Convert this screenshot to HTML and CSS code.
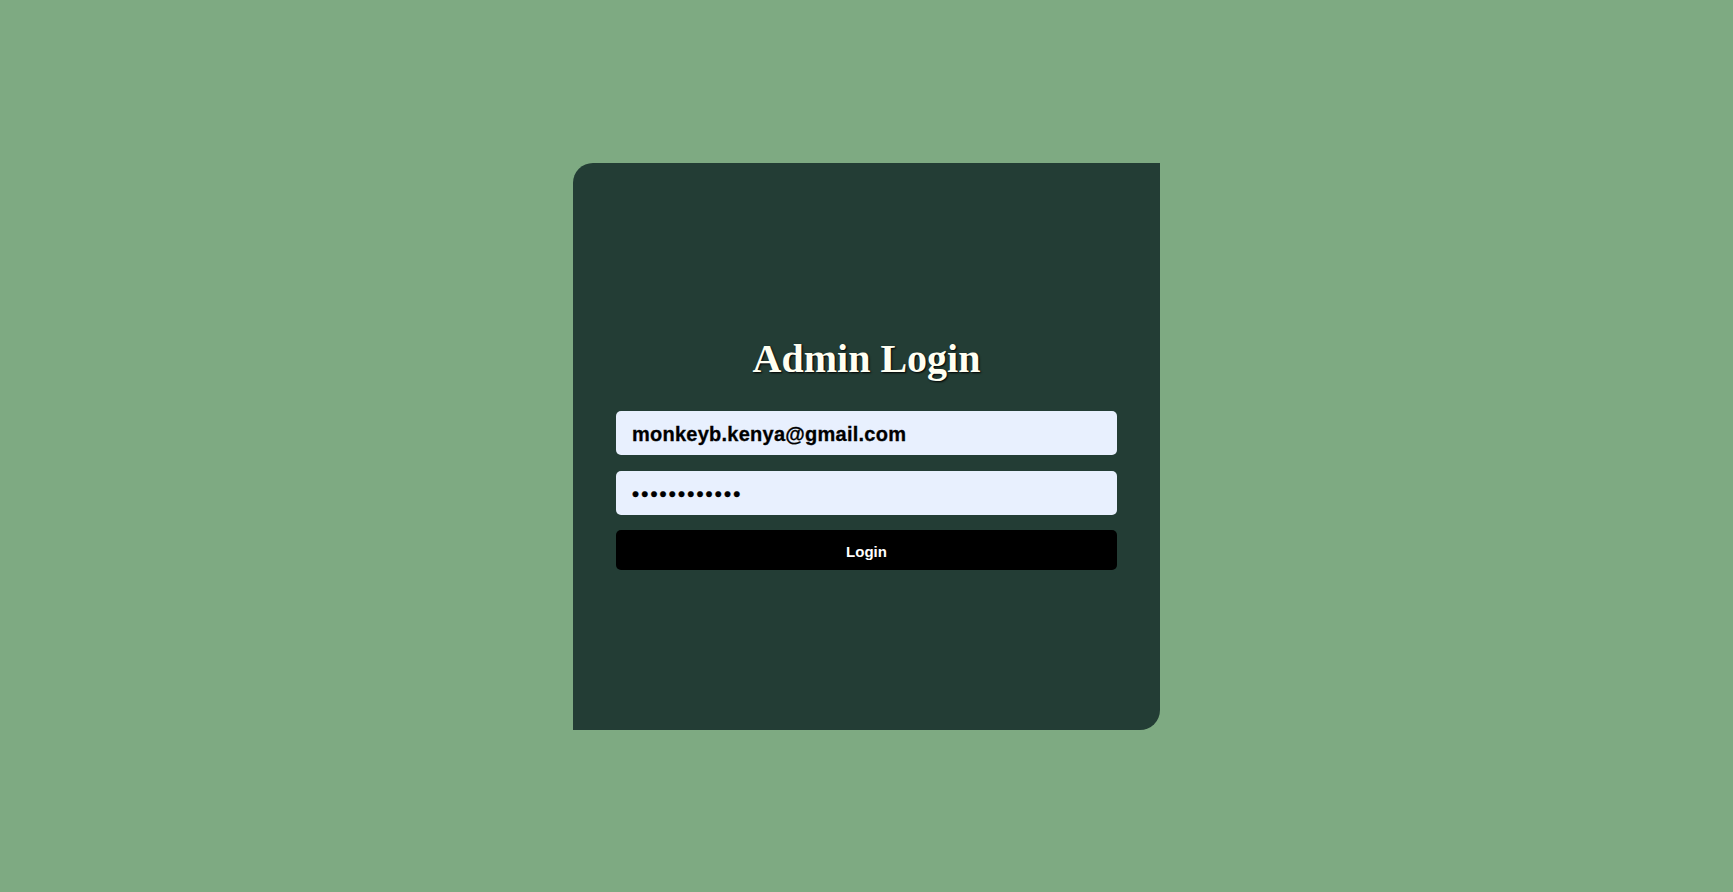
FILE: index.html
```html
<!DOCTYPE html>
<html lang="en">
<head>
<meta charset="utf-8">
<title>Admin Login</title>
<link rel="stylesheet" href="styles.css">
</head>
<body>
<div class="page">
  <form class="card" onsubmit="return false;">
    <h1 class="title">Admin Login</h1>
    <div class="fields">
      <input class="field" type="email" value="monkeyb.kenya@gmail.com">
      <input class="field" type="password" value="adminpass123">
      <button class="btn" type="submit">Login</button>
    </div>
  </form>
</div>
</body>
</html>
```
FILE: styles.css
```css
* { box-sizing: border-box; }
html, body { margin: 0; padding: 0; }
body {
  background: #7eaa82;
  font-family: "Liberation Sans", Arial, sans-serif;
}
.page {
  width: 100%;
  height: 892px;
  display: flex;
  align-items: center;
  justify-content: center;
}
.card {
  width: 587px;
  height: 567px;
  background: #233d35;
  border-radius: 20px 0 20px 0;
  padding: 13px 43px 0;
  display: flex;
  flex-direction: column;
  justify-content: center;
}
.title {
  margin: 0 0 29px;
  font-family: "Liberation Serif", "Times New Roman", serif;
  font-weight: bold;
  font-size: 40px;
  line-height: 46px;
  text-align: center;
  color: #fffff2;
  text-shadow: 1px 1px 2px #000;
}
.fields {
  display: flex;
  flex-direction: column;
}
.field {
  height: 44px;
  width: 100%;
  border: none;
  border-radius: 5px;
  background: #e8f0fe;
  padding: 3px 16px 0;
  font-family: "Liberation Sans", Arial, sans-serif;
  font-weight: bold;
  font-size: 20px;
  letter-spacing: 0.25px;
  color: #000;
  margin-bottom: 16px;
  outline: none;
  -webkit-text-stroke: 0.3px #000;
}
.field[type="password"] { margin-bottom: 15px; letter-spacing: 2.2px; }
.btn {
  height: 40px;
  width: 100%;
  border: none;
  border-radius: 5px;
  background: #000;
  color: #fff;
  font-family: "Liberation Sans", Arial, sans-serif;
  font-weight: bold;
  font-size: 15px;
  padding-top: 5px;
  cursor: pointer;
}
```
